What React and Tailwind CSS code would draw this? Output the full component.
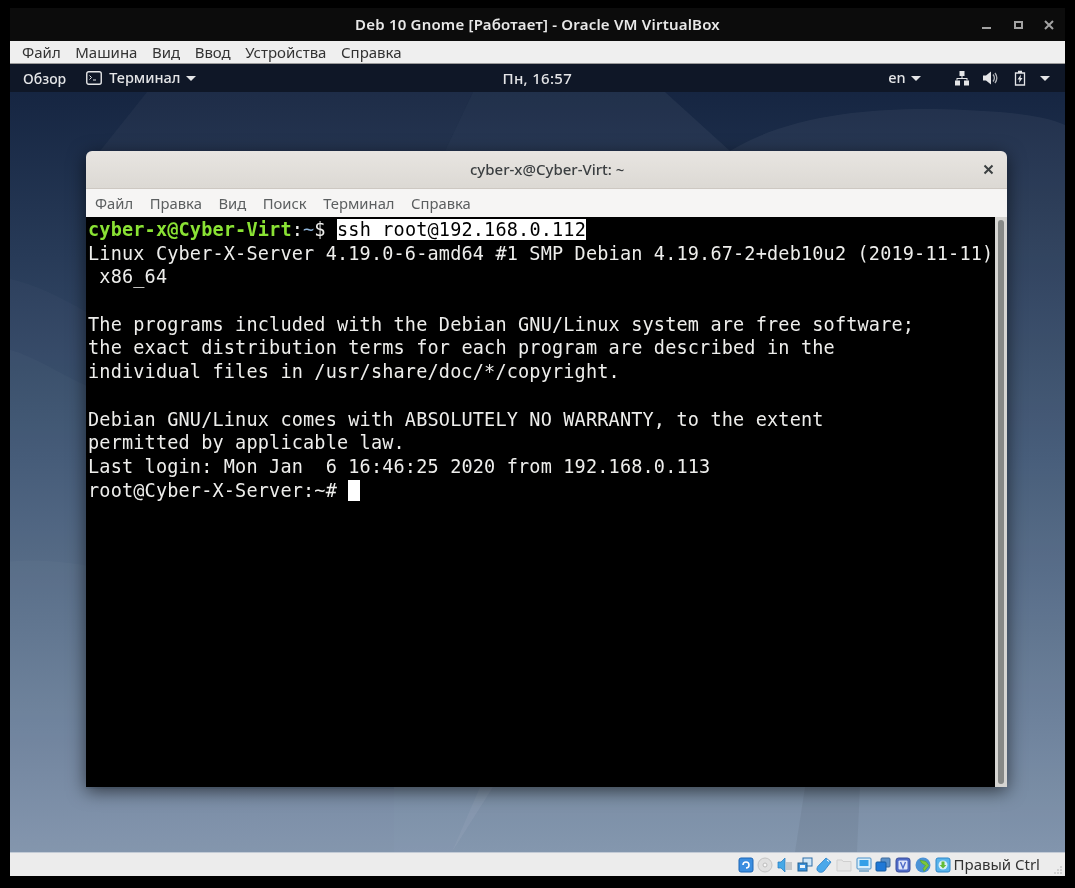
import React from 'react';

const SANS = { fontFamily: '"Noto Sans", "Open Sans", sans-serif' };

// output lines after the prompt, wrapped the way the terminal wrapped them
const OUTPUT = [
    'Linux Cyber-X-Server 4.19.0-6-amd64 #1 SMP Debian 4.19.67-2+deb10u2 (2019-11-11)',
    ' x86_64',
    '',
    'The programs included with the Debian GNU/Linux system are free software;',
    'the exact distribution terms for each program are described in the',
    'individual files in /usr/share/doc/*/copyright.',
    '',
    'Debian GNU/Linux comes with ABSOLUTELY NO WARRANTY, to the extent',
    'permitted by applicable law.',
    'Last login: Mon Jan  6 16:46:25 2020 from 192.168.0.113',
];

function Caret({ className }) {
    return (
        <svg width="10" height="5" viewBox="0 0 10 5" className={className}>
            <path d="M0 0h10L5 5z" fill="currentColor" />
        </svg>
    );
}

// faint curved shapes of the Debian 10 wallpaper
function Wallpaper() {
    return (
        <svg className="absolute inset-0 w-full h-full" viewBox="0 0 1055 761" preserveAspectRatio="none">
            <path d="M90 59L137 0H463L435 59V690H90Z" fill="#ffffff" fillOpacity="0.035" />
            <path d="M463 0H655L720 59C800 10 920 15 990 20C1015 22 1040 26 1055 33V761H442L470 696H435V59Z" fill="#ffffff" fillOpacity="0.05" />
            <path d="M0 187C25 193 50 205 76 220V698H384V761H0Z" fill="#ffffff" fillOpacity="0.02" />
            <path d="M0 258C25 265 50 282 76 294V698H384V761H0Z" fill="#ffffff" fillOpacity="0.025" />
            <path d="M0 470C25 468 50 470 76 474V698H384V761H0Z" fill="#ffffff" fillOpacity="0.025" />
            <path d="M384 696H483L442 761H384Z" fill="#ffffff" fillOpacity="0.07" />
            <path d="M483 696H990V761H442Z" fill="#ffffff" fillOpacity="0.02" />
            <path d="M795 696H850L847 761H785Z" fill="#000000" fillOpacity="0.05" />
        </svg>
    );
}

function TopBar() {
    return (
        <div className="relative flex h-[28px] items-center bg-[#0f1727] text-[14.5px] font-medium text-[#e4e5e7]">
            <span className="ml-[13px] text-[14px]">Обзор</span>
            <svg width="16" height="14" viewBox="0 0 16 14" className="ml-[20px]" fill="none" stroke="currentColor">
                <rect x="0.75" y="0.75" width="14.5" height="12.5" rx="2" strokeWidth="1.4" />
                <path d="M3.5 4.5l2 2-2 2M7 9h3" strokeWidth="1" />
            </svg>
            <span className="ml-[7px]">Терминал</span>
            <Caret className="ml-[5px]" />
            <span className="ml-[307px] text-[15px] tracking-[0.3px]">Пн, 16:57</span>
            <span className="ml-[316px]">en</span>
            <Caret className="ml-[5px]" />
            <svg width="16" height="16" viewBox="0 0 16 16" className="ml-[33px]" fill="currentColor">
                <rect x="5.5" y="1" width="5" height="5" />
                <rect x="1" y="10.5" width="5" height="5" />
                <rect x="10" y="10.5" width="5" height="5" />
                <path d="M7.5 6h1v2h5v2.500h-1V9H3.500v1.500h-1V8h5z" />
            </svg>
            <svg width="16" height="14" viewBox="0 0 16 14" className="ml-[12px]" fill="currentColor">
                <path d="M1 4.500h3L9 .5v13L4 9.500H1z" />
                <path d="M11 3.500c1.600 2 1.600 5 0 7M13 2c2.200 3 2.200 7 0 10" fill="none" stroke="currentColor" strokeWidth="1.300" opacity="0.75" />
            </svg>
            <svg width="12" height="16" viewBox="0 0 12 16" className="ml-[16px]" fill="none" stroke="currentColor">
                <path d="M4 1.500h4M1.500 3h9v12h-9z" strokeWidth="1.300" />
                <path d="M7 4.500L3.500 9.500h2L5 13l3.500-5h-2z" fill="currentColor" stroke="none" />
            </svg>
            <Caret className="ml-[14px]" />
        </div>
    );
}

function TerminalWindow() {
    return (
        <div className="relative flex flex-1 flex-col overflow-hidden rounded-t-[6px] shadow-[0_4px_18px_rgba(0,0,0,0.6)]">
            <div className="flex h-[38px] items-center justify-between bg-gradient-to-b from-[#e8e5e1] to-[#dcd9d4] border-b border-[#cdc8c2] pl-[384px] pr-[13px] text-[15px] font-medium text-[#3b3f41]">
                <span>cyber-x@Cyber-Virt: ~</span>
                <svg width="11" height="11" viewBox="0 0 11 11" stroke="#3b3f41" strokeWidth="2">
                    <path d="M1.500 1.500l8 8M9.500 1.500l-8 8" />
                </svg>
            </div>
            <div className="flex h-[28px] items-center gap-[16.5px] bg-[#f6f5f4] pl-[9px] text-[14.8px] text-[#5c5f60]">
                <span>Файл</span>
                <span>Правка</span>
                <span>Вид</span>
                <span>Поиск</span>
                <span>Терминал</span>
                <span>Справка</span>
            </div>
            <div className="flex flex-1">
                <div
                    className="flex-1 bg-black pl-[2px] pt-[1px] text-[18.55px] leading-[23.7px] tracking-[0.16px] text-[#eeeeec] whitespace-pre"
                    style={{ fontFamily: '"DejaVu Sans Mono", monospace' }}
                >
                    <div>
                        <span className="font-bold text-[#8ae234]">cyber-x@Cyber-Virt</span>
                        <span>:</span>
                        <span className="text-[#8fb4d9]">~</span>
                        <span>$ </span>
                        <span className="bg-white text-black">ssh root@192.168.0.112</span>
                    </div>
                    {OUTPUT.map((line, i) => (
                        <div key={i} className="h-[23.7px]">{line}</div>
                    ))}
                    <div>root@Cyber-X-Server:~# <span className="bg-white">{' '}</span></div>
                </div>
                <div className="flex w-[12px] justify-center bg-[#d6d5d2] py-[3px]">
                    <div className="w-[6px] rounded-full bg-[#868886]" />
                </div>
            </div>
        </div>
    );
}

function StatusIcons() {
    return (
        <div className="flex items-center gap-[3.7px]">
            <svg width="16" height="16" viewBox="0 0 16 16">
                <rect x="1" y="1" width="14" height="14" rx="2" fill="#3b8ee0" stroke="#1f66b5" />
                <path d="M5 8a3 3 0 1 1 3 3" fill="none" stroke="#fff" strokeWidth="1.600" />
            </svg>
            <svg width="16" height="16" viewBox="0 0 16 16">
                <circle cx="8" cy="8" r="7" fill="#e0e0e0" stroke="#c4c4c4" />
                <circle cx="8" cy="8" r="2" fill="#f6f6f6" stroke="#bdbdbd" />
            </svg>
            <svg width="16" height="16" viewBox="0 0 16 16">
                <path d="M1 5h3l4-4v14l-4-4H1z" fill="#45a8e6" stroke="#2378bf" strokeWidth="0.700" />
                <rect x="9" y="5" width="6" height="8" fill="#c4c8cb" />
            </svg>
            <svg width="16" height="16" viewBox="0 0 16 16">
                <rect x="6" y="1" width="9" height="8" fill="#cfe6f8" stroke="#2f6ea8" />
                <rect x="1" y="6" width="9" height="8" fill="#3a92dd" stroke="#25608f" />
                <rect x="3" y="8" width="5" height="3" fill="#eaf5fd" />
            </svg>
            <svg width="16" height="16" viewBox="0 0 16 16">
                <path d="M10 1l5 4-7 9c-2 2-5 1.500-6.300 0s-.7-3 0-4.500z" fill="#4aa8ea" stroke="#2a7dc4" strokeWidth="0.800" />
                <path d="M11 3l2 1.500" stroke="#fff" />
            </svg>
            <svg width="16" height="16" viewBox="0 0 16 16">
                <path d="M1 3h5l1 1.500h8V14H1z" fill="#e6e6e6" stroke="#cfcfcf" />
            </svg>
            <svg width="16" height="16" viewBox="0 0 16 16">
                <rect x="1" y="1" width="14" height="11" rx="1" fill="#d8eefb" stroke="#4a90c8" />
                <rect x="3.500" y="3" width="9" height="6" fill="#35a0e8" />
                <rect x="3" y="13" width="10" height="2" fill="#8cb2cc" />
            </svg>
            <svg width="16" height="16" viewBox="0 0 16 16">
                <rect x="6" y="1" width="9" height="9" rx="1" fill="#5a90c8" stroke="#3f6a9c" />
                <rect x="1" y="5" width="10" height="9" rx="1" fill="#1f78d6" stroke="#175a9f" />
            </svg>
            <svg width="16" height="16" viewBox="0 0 16 16">
                <rect x="1" y="1" width="14" height="14" rx="2.500" fill="#4f6bc8" stroke="#3a4e9a" />
                <rect x="3.500" y="3.500" width="9" height="9" rx="1" fill="#dfe6fa" />
                <path d="M5.500 5l2.500 6 2.500-6" fill="none" stroke="#4f6bc8" strokeWidth="1.400" />
            </svg>
            <svg width="16" height="16" viewBox="0 0 16 16">
                <circle cx="8" cy="8" r="7.500" fill="#4b92d6" />
                <path d="M5 3l6 1.500 3 4-5 6-1-3 2.500-3L6.500 6z" fill="#7cc63c" stroke="#4d9a20" strokeWidth="0.500" />
            </svg>
            <svg width="16" height="16" viewBox="0 0 16 16">
                <rect x="1" y="1" width="14" height="14" rx="2" fill="#58b4ec" stroke="#2f86c8" />
                <circle cx="8" cy="8" r="4.500" fill="#d9f0fb" />
                <path d="M6.500 4.500h3V8h1.800L8 11.500 4.700 8h1.800z" fill="#63bb37" />
            </svg>
        </div>
    );
}

export default function App() {
    return (
        <div className="h-[888px] w-[1075px] overflow-hidden bg-black px-[10px] pt-[8px] [filter:blur(0.7px)]" style={SANS}>
            <div className="flex h-[868px] flex-col">
                <div className="relative flex h-[33px] items-center justify-center bg-[#0c0c0c] text-[15px] font-semibold tracking-[0.2px] text-[#e8e8e8]">
                    <span>Deb 10 Gnome [Работает] - Oracle VM VirtualBox</span>
                    <div className="absolute right-[8px] top-[10px] flex items-center gap-[15.5px] text-[#a3a3a3]">
                        <svg width="16" height="14" viewBox="0 0 16 14" fill="currentColor"><rect x="4" y="9" width="9" height="2" /></svg>
                        <svg width="16" height="14" viewBox="0 0 16 14" fill="none" stroke="currentColor" strokeWidth="2"><rect x="5" y="4" width="7" height="6" /></svg>
                        <svg width="16" height="14" viewBox="0 0 16 14" stroke="currentColor" strokeWidth="2"><path d="M4 3l8 8M12 3l-8 8" /></svg>
                    </div>
                </div>
                <div className="flex h-[23px] items-center gap-[14.5px] border-b border-[#9a9a9a] bg-[#efefef] pl-[12px] text-[15px] text-[#333]">
                    <span>Файл</span>
                    <span>Машина</span>
                    <span>Вид</span>
                    <span>Ввод</span>
                    <span>Устройства</span>
                    <span>Справка</span>
                </div>
                <div className="flex flex-1 flex-col bg-gradient-to-b from-[#13223e] via-[#3f5674] to-[#7c90a9]">
                    <TopBar />
                    <div className="relative flex flex-1 pb-[65px] pl-[76px] pr-[58px] pt-[59px]">
                        <Wallpaper />
                        <TerminalWindow />
                    </div>
                </div>
                <div className="relative flex h-[24px] items-center justify-end border-t border-[#c3cbd6] bg-[#ececec] pr-[25px] text-[15px] text-[#333]">
                    <StatusIcons />
                    <span className="ml-[3px]">Правый Ctrl</span>
                    <svg width="10" height="10" viewBox="0 0 10 10" className="absolute bottom-[1px] right-[2px]" fill="#cfcfcf">
                        <rect x="7" y="1" width="2" height="2" />
                        <rect x="4" y="4" width="2" height="2" />
                        <rect x="7" y="4" width="2" height="2" />
                        <rect x="1" y="7" width="2" height="2" />
                        <rect x="4" y="7" width="2" height="2" />
                        <rect x="7" y="7" width="2" height="2" />
                    </svg>
                </div>
            </div>
        </div>
    );
}
